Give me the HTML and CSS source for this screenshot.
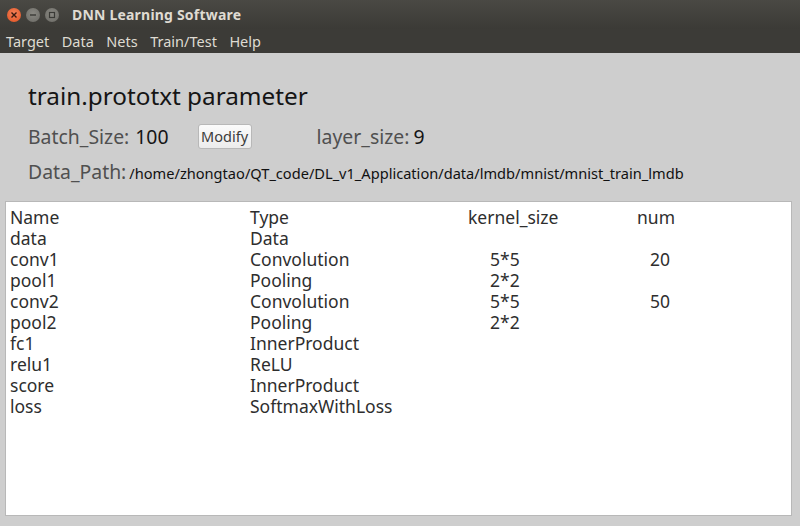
FILE: index.html
```html
<!DOCTYPE html>
<html>
<head>
<meta charset="utf-8">
<link rel="stylesheet" href="styles.css">
</head>
<body>
<div class="window">
  <div class="titlebar">
    <div class="wbtns">
      <span class="wbtn close"><svg width="14" height="14" viewBox="0 0 14 14"><path d="M4.5 4.5 L9.5 9.5 M9.5 4.5 L4.5 9.5" stroke="#3a1a10" stroke-width="1.4"/></svg></span>
      <span class="wbtn"><svg width="14" height="14" viewBox="0 0 14 14"><path d="M4 7 H10" stroke="#3a3a36" stroke-width="1.4"/></svg></span>
      <span class="wbtn"><svg width="14" height="14" viewBox="0 0 14 14"><rect x="4.5" y="4.5" width="5" height="5" fill="none" stroke="#3a3a36" stroke-width="1.2"/></svg></span>
    </div>
    <div class="title">DNN Learning Software</div>
  </div>
  <div class="menubar">
    <span class="mi">Target</span>
    <span class="mi">Data</span>
    <span class="mi">Nets</span>
    <span class="mi">Train/Test</span>
    <span class="mi">Help</span>
  </div>
  <div class="content">
    <div class="heading">train.prototxt parameter</div>
    <div class="row1">
      <span class="lbl">Batch_Size:</span><span class="val">100</span>
      <button class="btn">Modify</button>
      <span class="lbl ls">layer_size:</span><span class="val v9">9</span>
    </div>
    <div class="row2">
      <span class="lbl">Data_Path:</span><span class="path">/home/zhongtao/QT_code/DL_v1_Application/data/lmdb/mnist/mnist_train_lmdb</span>
    </div>
    <div class="tablebox">
      <div class="grid">
        <span>Name</span><span>Type</span><span>kernel_size</span><span>num</span>
        <span>data</span><span>Data</span><span></span><span></span>
        <span>conv1</span><span>Convolution</span><span class="k">5*5</span><span class="n">20</span>
        <span>pool1</span><span>Pooling</span><span class="k">2*2</span><span></span>
        <span>conv2</span><span>Convolution</span><span class="k">5*5</span><span class="n">50</span>
        <span>pool2</span><span>Pooling</span><span class="k">2*2</span><span></span>
        <span>fc1</span><span>InnerProduct</span><span></span><span></span>
        <span>relu1</span><span>ReLU</span><span></span><span></span>
        <span>score</span><span>InnerProduct</span><span></span><span></span>
        <span>loss</span><span>SoftmaxWithLoss</span><span></span><span></span>
      </div>
    </div>
  </div>
</div>
</body>
</html>
```
FILE: styles.css
```css
html, body { margin: 0; padding: 0; }
body { width: 800px; height: 526px; overflow: hidden; font-family: "Noto Sans", "Open Sans", sans-serif; background: #cecece; }
.window { width: 800px; height: 526px; display: flex; flex-direction: column; }
.titlebar { height: 29px; background: linear-gradient(#4a4944, #3b3a36); display: flex; align-items: center; }
.wbtns { display: flex; gap: 5px; padding-left: 7px; width: 65px; }
.wbtn { width: 14px; height: 14px; border-radius: 50%; background: radial-gradient(circle at 50% 40%, #8a8983, #6a6964); display: flex; }
.wbtn.close { background: radial-gradient(circle at 50% 40%, #f5825a, #e0501f); }
.title { color: #dfdbd2; font-weight: bold; font-size: 14px; letter-spacing: 0.2px; }
.menubar { height: 24px; background: #3c3b37; display: flex; align-items: center; padding-left: 6px; color: #dfdbd2; font-size: 14.5px; padding-bottom: 1px; box-sizing: border-box; }
.mi { margin-right: 12.5px; }
.content { flex: 1; display: flex; flex-direction: column; padding: 0 8px 10px 5px; }
.heading { font-size: 24.3px; color: #151515; margin: 26px 0 0 23px; line-height: 34px; height: 34px; }
.row1 { display: flex; align-items: center; margin: 10px 0 0 23px; height: 26px; }
.lbl { font-size: 19.4px; color: #505050; }
.val { font-size: 19.4px; color: #151515; margin-left: 6px; }
.btn { margin-left: 29px; height: 25px; width: 54px; padding: 0; font-family: inherit; font-size: 14.5px; color: #3c3c3c; background: linear-gradient(#fbfbfb, #ececec); border: 1px solid #b8b8b8; border-radius: 3px; }
.ls { margin-left: 65px; }
.v9 { margin-left: 4px; }
.row2 { display: flex; align-items: baseline; margin: 11px 0 0 23px; height: 24px; line-height: 24px; }
.path { font-size: 14.6px; color: #111; margin-left: 3px; }
.tablebox { flex: 1; margin-top: 17px; background: #fff; border: 1px solid #b8b8b8; }
.grid { display: grid; grid-template-columns: 240px 218px 169px 100px; font-size: 17.5px; line-height: 21px; color: #2e2e2e; padding: 5px 0 0 4px; }
.k { padding-left: 22px; }
.n { padding-left: 13px; }
```
